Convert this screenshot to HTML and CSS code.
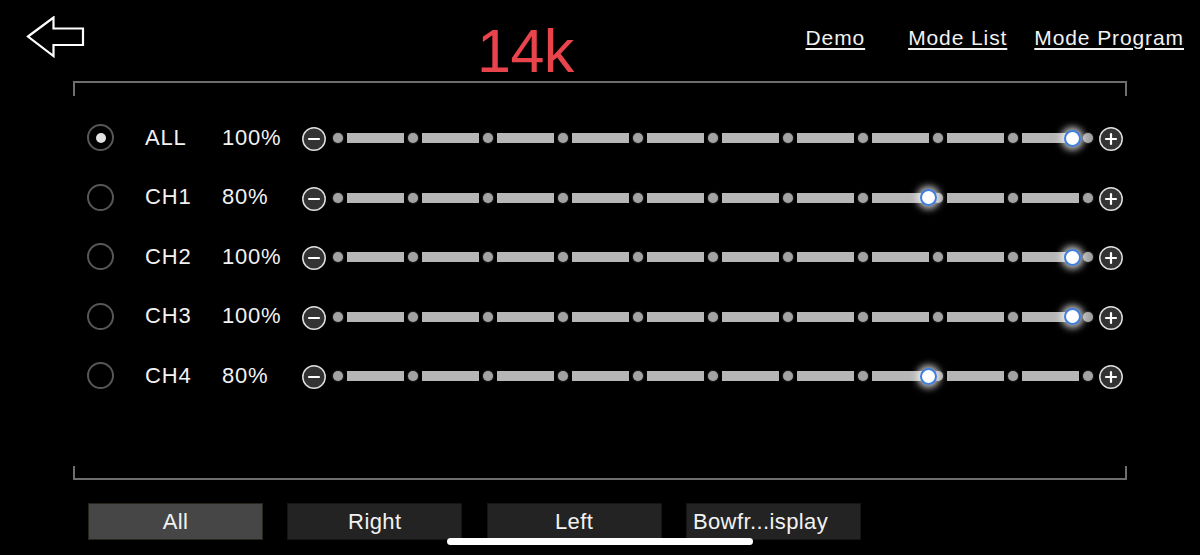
FILE: index.html
```html
<!DOCTYPE html>
<html lang="en">
<head>
<meta charset="utf-8">
<title>14k</title>
<link rel="stylesheet" href="styles.css">
</head>
<body>
<div class="page">
  <header class="header">
    <svg class="back" width="60" height="42" viewBox="0 0 60 42">
      <polygon points="2,20.5 27.5,1.5 27.5,12.5 57,12.5 57,29 27.5,29 27.5,40" fill="none" stroke="#fff" stroke-width="2.2" stroke-linejoin="miter"/>
    </svg>
    <div class="title">14k</div>
    <nav class="links">
      <a class="link link-demo">Demo</a>
      <a class="link link-list">Mode List</a>
      <a class="link link-prog">Mode Program</a>
    </nav>
  </header>

  <section class="frame">
    <div class="cap cap-top"></div>
    <div class="rows">
      <div class="row">
        <span class="radio on"></span>
        <span class="label">ALL</span>
        <span class="pct">100%</span>
        <svg class="step" width="24" height="24" viewBox="0 0 24 24"><circle cx="12" cy="12" r="11.2" fill="#333" stroke="#dedede" stroke-width="1.5"/><line x1="7" y1="12" x2="17" y2="12" stroke="#fff" stroke-width="2.2" stroke-linecap="round"/></svg>
        <div class="slider">
          <div class="track">
            <i class="dot"></i><i class="seg"></i><i class="dot"></i><i class="seg"></i><i class="dot"></i><i class="seg"></i><i class="dot"></i><i class="seg"></i><i class="dot"></i><i class="seg"></i><i class="dot"></i><i class="seg"></i><i class="dot"></i><i class="seg"></i><i class="dot"></i><i class="seg"></i><i class="dot"></i><i class="seg"></i><i class="dot"></i><i class="seg"></i><i class="dot"></i>
          </div>
          <span class="thumb" style="left:731px"></span>
        </div>
        <svg class="step" width="24" height="24" viewBox="0 0 24 24"><circle cx="12" cy="12" r="11.2" fill="#333" stroke="#dedede" stroke-width="1.5"/><line x1="7" y1="12" x2="17" y2="12" stroke="#fff" stroke-width="2.2" stroke-linecap="round"/><line x1="12" y1="7" x2="12" y2="17" stroke="#fff" stroke-width="2.2" stroke-linecap="round"/></svg>
      </div>

      <div class="row">
        <span class="radio"></span>
        <span class="label">CH1</span>
        <span class="pct">80%</span>
        <svg class="step" width="24" height="24" viewBox="0 0 24 24"><circle cx="12" cy="12" r="11.2" fill="#333" stroke="#dedede" stroke-width="1.5"/><line x1="7" y1="12" x2="17" y2="12" stroke="#fff" stroke-width="2.2" stroke-linecap="round"/></svg>
        <div class="slider">
          <div class="track">
            <i class="dot"></i><i class="seg"></i><i class="dot"></i><i class="seg"></i><i class="dot"></i><i class="seg"></i><i class="dot"></i><i class="seg"></i><i class="dot"></i><i class="seg"></i><i class="dot"></i><i class="seg"></i><i class="dot"></i><i class="seg"></i><i class="dot"></i><i class="seg"></i><i class="dot"></i><i class="seg"></i><i class="dot"></i><i class="seg"></i><i class="dot"></i>
          </div>
          <span class="thumb" style="left:587px"></span>
        </div>
        <svg class="step" width="24" height="24" viewBox="0 0 24 24"><circle cx="12" cy="12" r="11.2" fill="#333" stroke="#dedede" stroke-width="1.5"/><line x1="7" y1="12" x2="17" y2="12" stroke="#fff" stroke-width="2.2" stroke-linecap="round"/><line x1="12" y1="7" x2="12" y2="17" stroke="#fff" stroke-width="2.2" stroke-linecap="round"/></svg>
      </div>

      <div class="row">
        <span class="radio"></span>
        <span class="label">CH2</span>
        <span class="pct">100%</span>
        <svg class="step" width="24" height="24" viewBox="0 0 24 24"><circle cx="12" cy="12" r="11.2" fill="#333" stroke="#dedede" stroke-width="1.5"/><line x1="7" y1="12" x2="17" y2="12" stroke="#fff" stroke-width="2.2" stroke-linecap="round"/></svg>
        <div class="slider">
          <div class="track">
            <i class="dot"></i><i class="seg"></i><i class="dot"></i><i class="seg"></i><i class="dot"></i><i class="seg"></i><i class="dot"></i><i class="seg"></i><i class="dot"></i><i class="seg"></i><i class="dot"></i><i class="seg"></i><i class="dot"></i><i class="seg"></i><i class="dot"></i><i class="seg"></i><i class="dot"></i><i class="seg"></i><i class="dot"></i><i class="seg"></i><i class="dot"></i>
          </div>
          <span class="thumb" style="left:731px"></span>
        </div>
        <svg class="step" width="24" height="24" viewBox="0 0 24 24"><circle cx="12" cy="12" r="11.2" fill="#333" stroke="#dedede" stroke-width="1.5"/><line x1="7" y1="12" x2="17" y2="12" stroke="#fff" stroke-width="2.2" stroke-linecap="round"/><line x1="12" y1="7" x2="12" y2="17" stroke="#fff" stroke-width="2.2" stroke-linecap="round"/></svg>
      </div>

      <div class="row">
        <span class="radio"></span>
        <span class="label">CH3</span>
        <span class="pct">100%</span>
        <svg class="step" width="24" height="24" viewBox="0 0 24 24"><circle cx="12" cy="12" r="11.2" fill="#333" stroke="#dedede" stroke-width="1.5"/><line x1="7" y1="12" x2="17" y2="12" stroke="#fff" stroke-width="2.2" stroke-linecap="round"/></svg>
        <div class="slider">
          <div class="track">
            <i class="dot"></i><i class="seg"></i><i class="dot"></i><i class="seg"></i><i class="dot"></i><i class="seg"></i><i class="dot"></i><i class="seg"></i><i class="dot"></i><i class="seg"></i><i class="dot"></i><i class="seg"></i><i class="dot"></i><i class="seg"></i><i class="dot"></i><i class="seg"></i><i class="dot"></i><i class="seg"></i><i class="dot"></i><i class="seg"></i><i class="dot"></i>
          </div>
          <span class="thumb" style="left:731px"></span>
        </div>
        <svg class="step" width="24" height="24" viewBox="0 0 24 24"><circle cx="12" cy="12" r="11.2" fill="#333" stroke="#dedede" stroke-width="1.5"/><line x1="7" y1="12" x2="17" y2="12" stroke="#fff" stroke-width="2.2" stroke-linecap="round"/><line x1="12" y1="7" x2="12" y2="17" stroke="#fff" stroke-width="2.2" stroke-linecap="round"/></svg>
      </div>

      <div class="row">
        <span class="radio"></span>
        <span class="label">CH4</span>
        <span class="pct">80%</span>
        <svg class="step" width="24" height="24" viewBox="0 0 24 24"><circle cx="12" cy="12" r="11.2" fill="#333" stroke="#dedede" stroke-width="1.5"/><line x1="7" y1="12" x2="17" y2="12" stroke="#fff" stroke-width="2.2" stroke-linecap="round"/></svg>
        <div class="slider">
          <div class="track">
            <i class="dot"></i><i class="seg"></i><i class="dot"></i><i class="seg"></i><i class="dot"></i><i class="seg"></i><i class="dot"></i><i class="seg"></i><i class="dot"></i><i class="seg"></i><i class="dot"></i><i class="seg"></i><i class="dot"></i><i class="seg"></i><i class="dot"></i><i class="seg"></i><i class="dot"></i><i class="seg"></i><i class="dot"></i><i class="seg"></i><i class="dot"></i>
          </div>
          <span class="thumb" style="left:587px"></span>
        </div>
        <svg class="step" width="24" height="24" viewBox="0 0 24 24"><circle cx="12" cy="12" r="11.2" fill="#333" stroke="#dedede" stroke-width="1.5"/><line x1="7" y1="12" x2="17" y2="12" stroke="#fff" stroke-width="2.2" stroke-linecap="round"/><line x1="12" y1="7" x2="12" y2="17" stroke="#fff" stroke-width="2.2" stroke-linecap="round"/></svg>
      </div>
    </div>
    <div class="cap cap-bottom"></div>
  </section>

  <div class="tabs">
    <button class="tab active">All</button>
    <button class="tab">Right</button>
    <button class="tab">Left</button>
    <button class="tab tab-left">Bowfr...isplay</button>
  </div>

  <div class="home-indicator"></div>
</div>
</body>
</html>
```

FILE: styles.css
```css
* { box-sizing: border-box; }

html, body {
  margin: 0;
  padding: 0;
  background: #000;
  width: 1200px;
  height: 555px;
  overflow: hidden;
}

body {
  font-family: "Liberation Sans", Arial, sans-serif;
  color: #f2f2f2;
}

.page {
  width: 1200px;
  height: 555px;
}

/* Header */
.header {
  height: 81px;
  display: flex;
  align-items: flex-start;
}

.back {
  display: block;
  margin-left: 26px;
  margin-top: 16px;
  flex: none;
}

.title {
  margin-left: 391px;
  margin-top: 21px;
  font-size: 61px;
  line-height: 61px;
  color: #e9434b;
  letter-spacing: -0.5px;
}

.links {
  display: flex;
  margin-top: 26px;
  margin-left: auto;
  margin-right: 16px;
}

.link {
  font-size: 21px;
  line-height: 24px;
  letter-spacing: 0.9px;
  color: #f2f2f2;
  text-decoration: underline;
  text-decoration-thickness: 1.5px;
  text-underline-offset: 3px;
}

.link-list { margin-left: 43px; }
.link-prog { margin-left: 27px; }

/* Frame */
.frame {
  margin-left: 73px;
  width: 1054px;
  display: flex;
  flex-direction: column;
}

.cap {
  border-left: 2px solid #6e6e6e;
  border-right: 2px solid #6e6e6e;
}

.cap-top {
  height: 15px;
  border-top: 2px solid #6e6e6e;
}

.cap-bottom {
  height: 14px;
  border-bottom: 2px solid #6e6e6e;
}

.rows {
  height: 370px;
  padding-top: 12px;
  padding-left: 14px;
  display: flex;
  flex-direction: column;
}

.row {
  height: 59.5px;
  display: flex;
  align-items: center;
  flex: none;
}

.radio {
  width: 27px;
  height: 27px;
  border-radius: 50%;
  border: 2px solid #575757;
  display: flex;
  align-items: center;
  justify-content: center;
  flex: none;
}

.radio.on::after {
  content: "";
  width: 10px;
  height: 10px;
  border-radius: 50%;
  background: #e2e2e2;
}

.label {
  margin-left: 31px;
  width: 77px;
  font-size: 22px;
  line-height: 22px;
  letter-spacing: 0.8px;
}

.pct {
  width: 80px;
  font-size: 22px;
  line-height: 22px;
  letter-spacing: 0.8px;
}

.step {
  display: block;
  flex: none;
  margin-top: 3px;
}

.slider {
  position: relative;
  width: 760px;
  height: 24px;
  margin: 0 6px 0 7px;
  padding-top: 0.5px;
  display: flex;
  align-items: center;
  flex: none;
}

.track {
  display: flex;
  align-items: center;
  gap: 4px;
}

.dot {
  display: block;
  width: 10px;
  height: 10px;
  border-radius: 50%;
  background: #a3a3a3;
  box-shadow: 0 0 2px #6a6a6a;
  flex: none;
}

.seg {
  display: block;
  width: 57px;
  height: 10px;
  background: #b6b6b6;
  flex: none;
}

.thumb {
  position: absolute;
  top: 50%;
  width: 17px;
  height: 17px;
  margin-top: -8.25px;
  border-radius: 50%;
  background: #fff;
  border: 2.5px solid #3f7fe0;
  box-shadow: 0 0 7px 3px rgba(255, 255, 255, 0.75);
}

/* Tabs */
.tabs {
  display: flex;
  gap: 24.3px;
  margin-top: 23px;
  margin-left: 88px;
}

.tab {
  width: 175px;
  height: 37px;
  padding: 0;
  background: #232323;
  border: 1px solid #151515;
  color: #f2f2f2;
  font-family: "Liberation Sans", Arial, sans-serif;
  font-size: 22px;
  line-height: 35px;
  letter-spacing: 0.4px;
  text-align: center;
}

.tab.active {
  background: #464646;
  border-color: #2a241f;
}

.tab-left {
  text-align: left;
  padding-left: 6px;
}

.home-indicator {
  position: fixed;
  left: 447px;
  top: 538px;
  width: 306px;
  height: 7px;
  border-radius: 4px;
  background: #fff;
}
```
